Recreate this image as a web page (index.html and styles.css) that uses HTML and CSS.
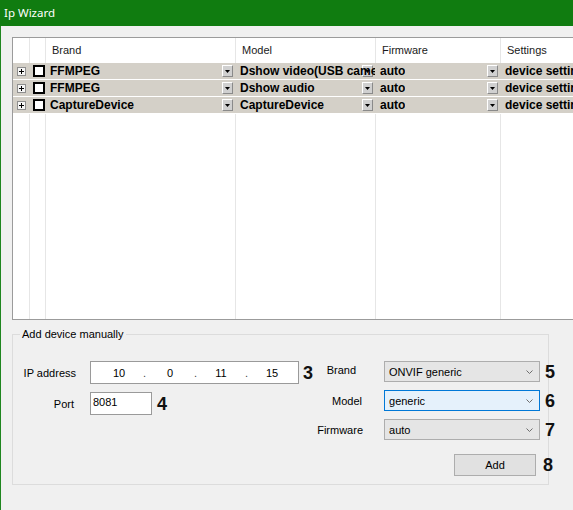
FILE: index.html
```html
<!DOCTYPE html>
<html>
<head>
<meta charset="utf-8">
<title>Ip Wizard</title>
<link rel="stylesheet" href="styles.css">
</head>
<body>
<div class="window">
  <div class="titlebar">Ip Wizard</div>
  <div class="client">
    <div class="list">
      <div class="lrow head">
        <div class="c c0"></div><div class="c c1"></div>
        <div class="c c2">Brand</div>
        <div class="c c3">Model</div>
        <div class="c c4">Firmware</div>
        <div class="c c5">Settings</div>
      </div>
      <div class="lrow item">
        <div class="c c0"><svg class="exp" width="9" height="9" viewBox="0 0 9 9"><rect x="0.5" y="0.5" width="8" height="8" fill="#f6f6f6" stroke="#8e8e8e"/><path d="M2 4.5h5M4.5 2v5" stroke="#000"/></svg></div>
        <div class="c c1"><span class="check"></span></div>
        <div class="c c2"><span class="txt">FFMPEG</span><span class="dd"><svg width="5" height="3" viewBox="0 0 5 3"><path d="M0 0h5L2.5 3z" fill="#000"/></svg></span></div>
        <div class="c c3"><span class="txt">Dshow video(USB camera)</span><span class="dd"><svg width="5" height="3" viewBox="0 0 5 3"><path d="M0 0h5L2.5 3z" fill="#000"/></svg></span></div>
        <div class="c c4"><span class="txt">auto</span><span class="dd"><svg width="5" height="3" viewBox="0 0 5 3"><path d="M0 0h5L2.5 3z" fill="#000"/></svg></span></div>
        <div class="c c5"><span class="txt">device settings</span></div>
      </div>
      <div class="lrow item">
        <div class="c c0"><svg class="exp" width="9" height="9" viewBox="0 0 9 9"><rect x="0.5" y="0.5" width="8" height="8" fill="#f6f6f6" stroke="#8e8e8e"/><path d="M2 4.5h5M4.5 2v5" stroke="#000"/></svg></div>
        <div class="c c1"><span class="check"></span></div>
        <div class="c c2"><span class="txt">FFMPEG</span><span class="dd"><svg width="5" height="3" viewBox="0 0 5 3"><path d="M0 0h5L2.5 3z" fill="#000"/></svg></span></div>
        <div class="c c3"><span class="txt">Dshow audio</span><span class="dd"><svg width="5" height="3" viewBox="0 0 5 3"><path d="M0 0h5L2.5 3z" fill="#000"/></svg></span></div>
        <div class="c c4"><span class="txt">auto</span><span class="dd"><svg width="5" height="3" viewBox="0 0 5 3"><path d="M0 0h5L2.5 3z" fill="#000"/></svg></span></div>
        <div class="c c5"><span class="txt">device settings</span></div>
      </div>
      <div class="lrow item">
        <div class="c c0"><svg class="exp" width="9" height="9" viewBox="0 0 9 9"><rect x="0.5" y="0.5" width="8" height="8" fill="#f6f6f6" stroke="#8e8e8e"/><path d="M2 4.5h5M4.5 2v5" stroke="#000"/></svg></div>
        <div class="c c1"><span class="check"></span></div>
        <div class="c c2"><span class="txt">CaptureDevice</span><span class="dd"><svg width="5" height="3" viewBox="0 0 5 3"><path d="M0 0h5L2.5 3z" fill="#000"/></svg></span></div>
        <div class="c c3"><span class="txt">CaptureDevice</span><span class="dd"><svg width="5" height="3" viewBox="0 0 5 3"><path d="M0 0h5L2.5 3z" fill="#000"/></svg></span></div>
        <div class="c c4"><span class="txt">auto</span><span class="dd"><svg width="5" height="3" viewBox="0 0 5 3"><path d="M0 0h5L2.5 3z" fill="#000"/></svg></span></div>
        <div class="c c5"><span class="txt">device settings</span></div>
      </div>
      <div class="lrow fill">
        <div class="c c0"></div><div class="c c1"></div><div class="c c2"></div>
        <div class="c c3"></div><div class="c c4"></div><div class="c c5"></div>
      </div>
    </div>

    <fieldset class="group">
      <legend>Add device manually</legend>
      <div class="form-left">
        <div class="lbl">IP address</div>
        <div class="ipbox">
          <span class="seg">10</span><span class="dot">.</span>
          <span class="seg">0</span><span class="dot">.</span>
          <span class="seg">11</span><span class="dot">.</span>
          <span class="seg">15</span>
        </div>
        <div class="num">3</div>
        <div class="lbl lbl-port">Port</div>
        <div class="portrow"><div class="portbox">8081</div><div class="num num4">4</div></div>
      </div>
      <div class="form-right">
        <div class="lbl lbl-brand">Brand</div>
        <div class="combo"><span>ONVIF generic</span><svg width="7" height="4" viewBox="0 0 7 4"><polyline points="0.5,0.5 3.5,3.5 6.5,0.5" fill="none" stroke="#6d6d6d"/></svg></div>
        <div class="num">5</div>
        <div class="lbl lbl-model">Model</div>
        <div class="combo focus"><span>generic</span><svg width="7" height="4" viewBox="0 0 7 4"><polyline points="0.5,0.5 3.5,3.5 6.5,0.5" fill="none" stroke="#6d6d6d"/></svg></div>
        <div class="num">6</div>
        <div class="lbl">Firmware</div>
        <div class="combo"><span>auto</span><svg width="7" height="4" viewBox="0 0 7 4"><polyline points="0.5,0.5 3.5,3.5 6.5,0.5" fill="none" stroke="#6d6d6d"/></svg></div>
        <div class="num">7</div>
        <div class="spacer"></div>
        <div class="btnrow"><div class="btn">Add</div></div>
        <div class="num num8">8</div>
      </div>
    </fieldset>
  </div>
</div>
</body>
</html>
```

FILE: styles.css
```css
html, body {
  margin: 0;
  padding: 0;
}
body {
  width: 573px;
  height: 510px;
  overflow: hidden;
  background: #f0f0f0;
  font-family: "Liberation Sans", Arial, sans-serif;
  font-size: 11px;
  color: #000;
}
.window {
  width: 573px;
  height: 510px;
  display: flex;
  flex-direction: column;
}
.titlebar {
  height: 26px;
  flex: none;
  background: #107c10;
  color: #fff;
  font-family: "Noto Sans", sans-serif;
  font-size: 11.5px;
  line-height: 26px;
  padding-left: 4px;
}
.client {
  flex: 1;
  border-left: 1px solid #1f861f;
  padding: 11px 0 0 11px;
  overflow: hidden;
}
.list {
  width: 620px;
  height: 283px;
  box-sizing: border-box;
  border: 1px solid #9b9b9b;
  background: #fff;
  display: flex;
  flex-direction: column;
}
.lrow {
  display: flex;
  flex: none;
}
.c {
  box-sizing: border-box;
  flex: none;
  border-right: 1px solid #e6e6e6;
  position: relative;
  overflow: hidden;
  white-space: nowrap;
}
.c0 { width: 17px; }
.c1 { width: 16px; }
.c2 { width: 190px; }
.c3 { width: 140px; }
.c4 { width: 125px; }
.c5 { width: 130px; }
.head {
  height: 25px;
}
.head .c {
  padding-left: 6px;
  line-height: 25px;
  color: #1a1a1a;
}
.head .c0, .head .c1 { padding-left: 0; }
.item {
  height: 16px;
  margin-bottom: 1px;
  background: #d4d0c8;
}
.item .c {
  border-right-color: transparent;
  display: flex;
  align-items: center;
  font-weight: bold;
  font-size: 12px;
}
.item .c0 {
  justify-content: center;
}
.exp {
  display: block;
}
.check {
  display: block;
  box-sizing: border-box;
  width: 12px;
  height: 12px;
  margin-left: 3px;
  border: 2px solid #000;
  background: #fff;
}
.txt {
  position: relative;
  z-index: 1;
  padding-left: 4px;
  min-width: 0;
  overflow: hidden;
}
.dd {
  position: absolute;
  right: 2px;
  top: 2px;
  width: 11px;
  height: 12px;
  box-sizing: border-box;
  border: 1px solid;
  border-color: #fff #8a8a8a #8a8a8a #fff;
  background: #d0d0d0;
  display: flex;
  align-items: center;
  justify-content: center;
}
.dd svg { display: block; }
.fill {
  flex: 1;
}
.fill .c { height: 100%; }

.group {
  margin: 7px 0 0 0;
  width: 537px;
  box-sizing: border-box;
  border: 1px solid #dcdcdc;
  padding: 20px 0 8px 0;
  display: flex;
  align-items: flex-start;
  min-inline-size: 0;
}
.group legend {
  margin-left: 7px;
  padding: 0 2px;
  line-height: 14px;
  font-size: 11px;
}
.form-left {
  display: grid;
  grid-template-columns: 77px 209px auto;
  row-gap: 8px;
  align-items: center;
}
.lbl {
  text-align: right;
  padding-right: 14px;
}
.lbl-port { padding-right: 16px; }
.ipbox {
  height: 23px;
  box-sizing: border-box;
  border: 1px solid #9a9a9a;
  background: #fff;
  display: flex;
  align-items: center;
  padding-left: 5px;
}
.seg {
  width: 46px;
  text-align: center;
}
.dot {
  width: 5px;
  text-align: center;
  color: #444;
}
.portrow {
  grid-column: 2 / span 2;
  display: flex;
  align-items: center;
}
.portbox {
  width: 62px;
  height: 23px;
  box-sizing: border-box;
  border: 1px solid #9a9a9a;
  background: #fff;
  padding-left: 2px;
  line-height: 19px;
}
.num {
  font-weight: bold;
  font-size: 18px;
  line-height: 18px;
  padding-left: 4px;
  color: #111;
}
.num4 { padding-left: 5px; }
.form-right {
  margin-left: 2px;
  display: grid;
  grid-template-columns: 69px 156px auto;
  row-gap: 8px;
  align-items: center;
}
.form-right .lbl { padding-right: 21px; }
.form-right .lbl-brand { padding-right: 28px; margin-bottom: 4px; }
.form-right .lbl-model { padding-right: 22px; }
.form-right .num { padding-left: 5px; }
.combo {
  height: 21px;
  box-sizing: border-box;
  border: 1px solid #adadad;
  background: #e5e5e5;
  display: flex;
  align-items: center;
  justify-content: space-between;
  padding: 0 6px 0 4px;
}
.combo.focus {
  background: #e5f1fb;
  border-color: #0078d7;
}
.combo svg { display: block; }
.spacer, .btnrow, .num8 { margin-top: 6px; }
.btnrow {
  display: flex;
  justify-content: flex-end;
  padding-right: 4px;
}
.btn {
  width: 82px;
  height: 22px;
  box-sizing: border-box;
  border: 1px solid #adadad;
  background: #e1e1e1;
  text-align: center;
  line-height: 20px;
}
.form-right .num8 { padding-left: 3px; }
```
